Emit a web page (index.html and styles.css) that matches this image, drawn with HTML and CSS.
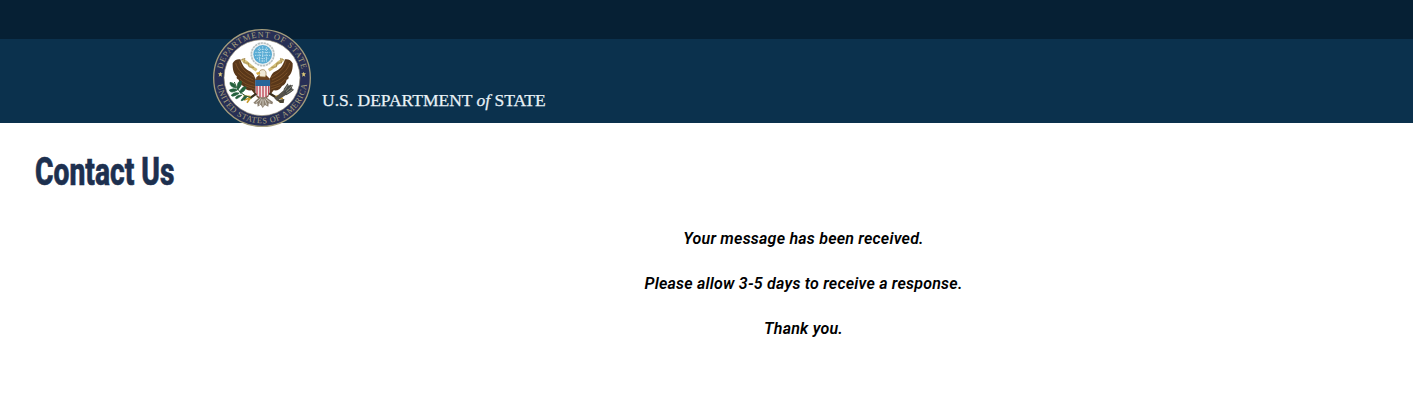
FILE: index.html
```
<!DOCTYPE html>
<html lang="en">
  <head>
    <meta charset="utf-8">
    <title>Contact Us</title>
    <link rel="stylesheet" href="styles.css">
  </head>
  <body>
    <div class="topbar"></div>
    <header class="header">
      <svg class="seal" viewBox="24 27 294 294" role="img" aria-label="Department of State seal">
        <defs>
          <path id="arc-top" d="M 49 174 A 122 122 0 0 1 293 174" />
          <path id="arc-bottom" d="M 35 174 A 136 136 0 0 0 307 174" />
          <g id="wing">
            <path fill="#593719" d="M158 192 C150 175 148 161 137 155 C121 150 112 137 106 118 C97 116 87 121 83 130 C82 153 89 164 96 170 C93 174 96 177 101 179 C103 190 109 196 115 198 C119 207 129 213 140 211 L151 225 L158 211 Z" />
            <path fill="none" stroke="#8a5b2d" stroke-width="2" d="M92 129 C98 150 113 166 145 180 M103 124 C108 147 126 160 149 173 M99 158 C114 175 127 182 148 190 M105 177 C118 192 132 196 149 199 M120 197 L150 208" />
            <path fill="none" stroke="#d3c07c" stroke-width="9" d="M111 119 C128 127 138 140 155 151" />
            <path fill="none" stroke="#927231" stroke-width="2" d="M108 120 L120 115 L116 129 L130 129 L132 141 L147 142" />
          </g>
        </defs>
        <circle cx="171" cy="174" r="145" fill="#272f55" stroke="#a39c7c" stroke-width="4" />
        <circle cx="171" cy="173" r="114" fill="#fff" stroke="#8f8872" stroke-width="2" />
        <text class="seal-text"><textPath href="#arc-top" startOffset="26" textLength="330" lengthAdjust="spacing">DEPARTMENT OF STATE</textPath></text>
        <text class="seal-text"><textPath href="#arc-bottom" startOffset="20" textLength="388" lengthAdjust="spacing">UNITED STATES OF AMERICA</textPath></text>
        <path fill="#d8c477" d="M46 155 l2 5 5 0 -4 4 2 6 -5 -3 -5 3 2 -6 -4 -4 5 0Z M296 155 l2 5 5 0 -4 4 2 6 -5 -3 -5 3 2 -6 -4 -4 5 0Z" />
        <circle cx="173" cy="103" r="34" fill="#f0f3f4" stroke="#b9c0c0" stroke-width="5" stroke-dasharray="7 2" />
        <circle cx="173" cy="103" r="28" fill="#59abd3" />
        <path fill="none" stroke="#b9dff0" stroke-width="3" stroke-dasharray="4 3" d="M158 88h31M151 97h44M150 106h46M155 115h36M162 123h24M163 82v42M173 79v48M184 82v42" />
        <use href="#wing" />
        <use href="#wing" transform="translate(346 0) scale(-1 1)" />
        <path fill="#6b431f" d="M151 190 L154 172 L165 163 L182 164 L193 175 L197 199 L190 230 L173 241 L155 231Z" />
        <path fill="#f0ead8" stroke="#92713c" stroke-width="2" d="M165 170 C158 158 164 148 175 149 C184 151 185 162 181 171Z" />
        <path fill="#d4a83d" d="M164 155 L153 158 L157 165 L166 161Z" />
        <path fill="#f2e7e7" stroke="#5b4b50" stroke-width="1.5" d="M151 180 H195 V218 Q192 229 173 236 Q153 229 151 218Z" />
        <path fill="none" stroke="#bc4351" stroke-width="4" d="M156 198v26M165 198v33M174 198v36M183 198v33M191 198v26" />
        <path fill="#28669a" d="M151 180h44v18h-44z" />
        <path fill="#8d8171" d="M163 232 L145 248 L151 253 L157 250 L158 260 L167 254 L173 264 L180 255 L190 260 L191 250 L202 253 L204 246 L183 232Z" />
        <path fill="none" stroke="#f0eee8" stroke-width="2" d="M167 236l-15 13M170 238l-7 17M174 238v21M179 238l6 16M182 236l14 12" />
        <path fill="none" stroke="#3b301e" stroke-width="7" d="M154 221 L134 235 M193 220 L215 233" />
        <path fill="none" stroke="#c89b2d" stroke-width="5" d="M137 230 L115 228 M135 234 L117 240 M136 234 L126 248 M212 230 L229 225 M214 233 L234 236 M212 233 L225 246" />
        <path fill="none" stroke="#315d34" stroke-width="3" d="M88 186 Q98 224 140 234" />
        <path fill="#24613c" stroke="#24613c" stroke-width="2" d="M91 204 Q73 199 75 187 Q92 189 93 205Z M96 211 Q76 222 73 210 Q86 202 97 210Z M96 202 Q98 181 109 183 Q112 197 98 210Z M101 221 Q80 234 79 225 Q89 215 102 219Z M104 215 Q114 195 124 202 Q119 215 106 220Z M110 226 Q90 243 92 232 Q100 223 111 226Z M119 228 Q103 244 111 242 Q122 239 126 230Z" />
        <path fill="none" stroke="#55524a" stroke-width="6" d="M210 237 L258 196 M214 240 L263 208 M215 242 L253 202" />
        <path fill="#494b49" d="M236 207 L248 190 L252 199 L264 194 L260 205 L267 209 L255 219 L244 226 L237 218Z" />
        <path fill="none" stroke="#aaa891" stroke-width="2" d="M239 211l9-15M243 215l18-17M245 220l18-11" />
        <path fill="#4a4535" d="M217 240 L238 237 L236 249 L225 249Z" />
      </svg>
      <div class="wordmark">U.S. DEPARTMENT <i>of</i> STATE</div>
    </header>
    <main>
      <h1>Contact Us</h1>
      <div class="message">
        <p>Your message has been received.</p>
        <p>Please allow 3-5 days to receive a response.</p>
        <p>Thank you.</p>
      </div>
    </main>
  </body>
</html>
```
FILE: styles.css
```
body {
  margin: 0;
  background: #fff;
  color: #000;
  font-family: Roboto, sans-serif;
}
.topbar {
  height: 39px;
  background: #062034;
}
.header {
  display: flex;
  align-items: flex-start;
  height: 84px;
  padding-left: 213px;
  background: #0b314d;
}
.seal {
  flex: none;
  width: 98px;
  height: 98px;
  margin-top: -10px;
}
.seal-text {
  fill: #aaa27f;
  font: 25px "Liberation Serif", serif;
}
.wordmark {
  margin: 51px 0 0 11px;
  color: #e9f2f7;
  font: 17.5px/20px "Liberation Serif", serif;
  white-space: nowrap;
  -webkit-text-stroke: 0.25px #e9f2f7;
}
main {
  padding: 26px 35px 0;
}
h1 {
  width: max-content;
  height: 46px;
  margin: 0;
  color: #1d304f;
  font-size: 39px;
  font-weight: 800;
  line-height: 46px;
  transform: scaleX(0.724);
  transform-origin: left;
  -webkit-text-stroke: 0.6px #1d304f;
}
.message {
  margin: 30px 0 0 194px;
  text-align: center;
  font-size: 16px;
  font-style: italic;
  font-weight: 600;
  line-height: 27px;
  letter-spacing: 0.22px;
}
.message p {
  margin: 0 0 18px;
}
```
